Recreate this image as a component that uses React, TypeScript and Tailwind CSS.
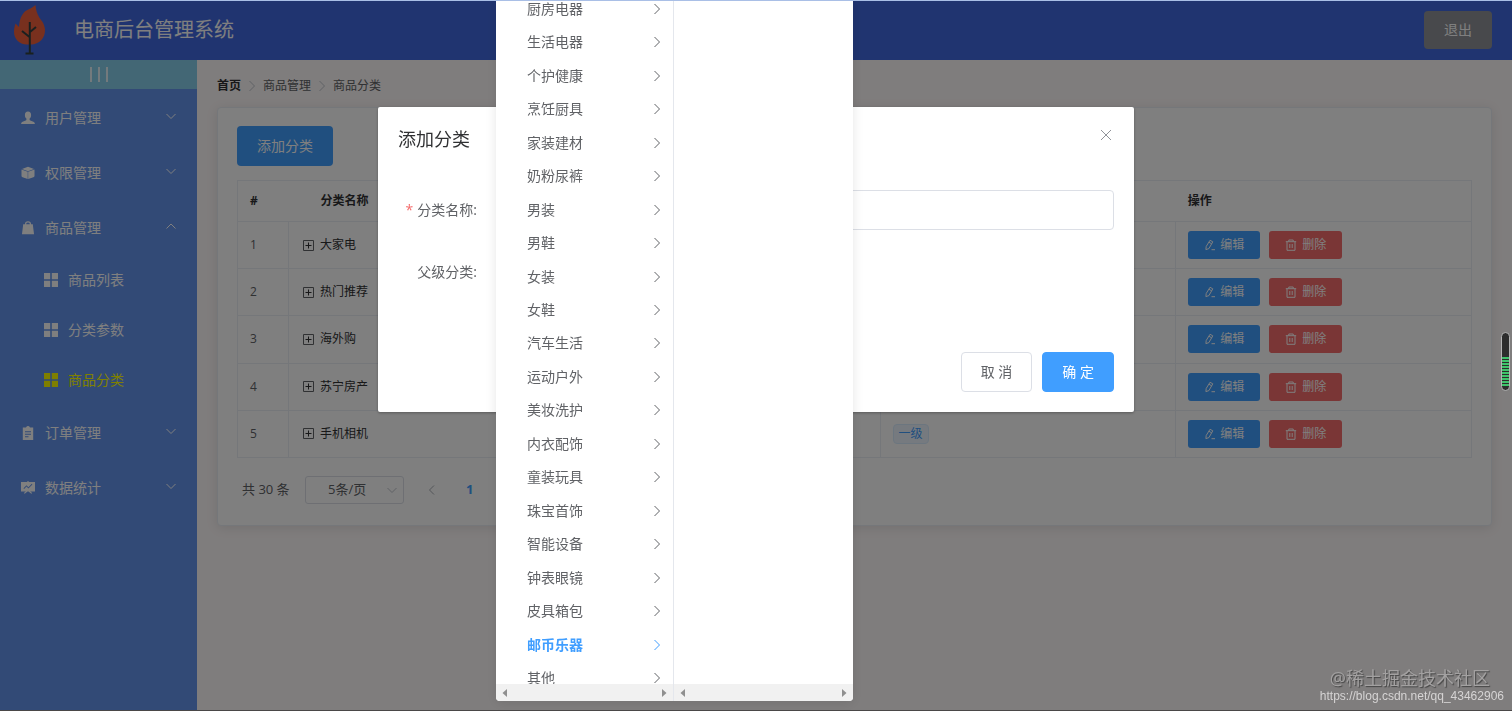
import { useState } from 'react'
import type { ReactNode } from 'react'
import clsx from 'clsx'

interface SubItem {
  id: string
  label: string
}

interface MenuItem {
  id: string
  label: string
  icon: ReactNode
  open?: boolean
  children?: SubItem[]
}

const UserIcon = () => (
  <svg viewBox="0 0 14 14" className="size-3.5" fill="currentColor">
    <path d="M7 0.6c2 0 3.1 1.4 3.1 3.3 0 1.6-.6 2.9-1.5 3.7v1.1c0 .4.3.6.7.8l3 1.2c.9.4 1.5 1 1.6 2.2H.1c.1-1.2.7-1.8 1.6-2.2l3-1.2c.4-.2.7-.4.7-.8V7.600C4.500 6.800 3.900 5.500 3.900 3.900 3.900 2 5 .6 7 .6z" />
  </svg>
)

const BoxIcon = () => (
  <svg viewBox="0 0 14 14" className="size-3.5" fill="currentColor">
    <path d="M7 .8l6 2.200L7 5.200 1 3zM.5 3.500l6.200 2.300v7.200L1.600 11.300C.9 11 .5 10.600.5 9.900zM13.500 3.500v6.400c0 .7-.4 1.100-1.100 1.400L7.200 13V5.800z" />
  </svg>
)

const GoodsIcon = () => (
  <svg viewBox="0 0 14 14" className="size-3.5" fill="none">
    <path d="M2.200 3.300h9.600l1.200 9.900H1z" fill="currentColor" />
    <path d="M4.600 5V2.900a2.400 2 0 0 1 4.800 0V5" stroke="currentColor" strokeWidth="1.200" />
  </svg>
)

const OrderIcon = () => (
  <svg viewBox="0 0 14 14" className="size-3.5" fill="currentColor">
    <path
      fillRule="evenodd"
      d="M5 1.400A2 2 0 0 1 7 0a2 2 0 0 1 2 1.400h3.200V14H1.800V1.400zM4 5.300v.9h6v-.9zm0 2.500v.9h6v-.9zm0 2.500v.9h3.500v-.9z"
    />
  </svg>
)

const StatsIcon = () => (
  <svg viewBox="0 0 14 14" className="size-3.5" fill="currentColor">
    <path
      fillRule="evenodd"
      d="M6.400 0h1.200v1H14v9.400H9.200l2 1.600-.9.800L7.500 10.500h-1L3.700 12.800l-.9-.8 2-1.600H0V1h6.400zM2.500 7.300l.6.600 2.400-2.300 1.900 1.800 4-4-.6-.6-3.400 3.400-1.900-1.900z"
    />
  </svg>
)

const GridIcon = () => (
  <svg viewBox="0 0 14 14" className="size-3.5" fill="currentColor">
    <path d="M0 0h6.200v6.200H0zM7.800 0H14v6.200H7.800zM0 7.800h6.200V14H0zM7.800 7.800H14V14H7.800z" />
  </svg>
)

const EditIcon = () => (
  <svg viewBox="0 0 12 12" className="size-3" fill="none" stroke="currentColor">
    <path d="M6 1.300l2.800 1.500-3.900 6.800-3 1 .3-3.100zM5 3.300l2.700 1.500M7.500 10.700h3.500" />
  </svg>
)

const TrashIcon = () => (
  <svg viewBox="0 0 12 12" className="size-3" fill="none" stroke="currentColor">
    <path d="M.8 2.700h10.400M3.800 2.500V1h4.400v1.500M2 2.700v8.600h8V2.700M4.800 5v4M7.200 5v4" />
  </svg>
)

const Chevron = ({ dir, className }: { dir: 'up' | 'down' | 'left' | 'right'; className?: string }) => {
  const paths = {
    up: 'M1.500 8.500L6 4l4.500 4.500',
    down: 'M1.500 4L6 8.500 10.500 4',
    left: 'M8 1.500L3.500 6 8 10.500',
    right: 'M3.500 1L8.500 6l-5 5',
  }
  return (
    <svg viewBox="0 0 12 12" className={clsx('size-3', className)} fill="none" stroke="currentColor">
      <path d={paths[dir]} />
    </svg>
  )
}

const Logo = () => (
  <svg viewBox="0 0 32 50" className="h-[50px] w-8">
    <path
      d="M21.500 0c.4 5 1.500 8 3.500 12 1.500 2.600 5.500 6 6 12.500C31.500 33 25 39.500 17 39.500h-4C5 39.500 0 33.500 0 27c0-4 .8-6 1.500-8.500L5 22c.5-5 1-10 5-14.500C13 4 17.500 4 21.500 0z"
      fill="#f0603c"
    />
    <path d="M15.800 17v31M15.500 32l-7.500-6M16 27l6-5M11.500 48.500h8" stroke="#33413f" strokeWidth="2" fill="none" />
  </svg>
)

const MENU: MenuItem[] = [
  { id: 'users', label: '用户管理', icon: <UserIcon /> },
  { id: 'rights', label: '权限管理', icon: <BoxIcon /> },
  {
    id: 'goods',
    label: '商品管理',
    icon: <GoodsIcon />,
    open: true,
    children: [
      { id: 'list', label: '商品列表' },
      { id: 'params', label: '分类参数' },
      { id: 'categories', label: '商品分类' },
    ],
  },
  { id: 'orders', label: '订单管理', icon: <OrderIcon /> },
  { id: 'reports', label: '数据统计', icon: <StatsIcon /> },
]

const CATEGORIES = ['大家电', '热门推荐', '海外购', '苏宁房产', '手机相机']

const PARENTS = [
  '厨房电器', '生活电器', '个护健康', '烹饪厨具', '家装建材', '奶粉尿裤', '男装',
  '男鞋', '女装', '女鞋', '汽车生活', '运动户外', '美妆洗护', '内衣配饰',
  '童装玩具', '珠宝首饰', '智能设备', '钟表眼镜', '皮具箱包', '邮币乐器', '其他',
]

function Header() {
  return (
    <header className="flex h-[60px] items-center justify-between bg-[#4169e1] pr-5 pl-3.5">
      <div className="flex items-center gap-7">
        <Logo />
        <h1 className="text-[20px] leading-7 text-white">电商后台管理系统</h1>
      </div>
      <button className="h-[38px] rounded bg-[#909399] px-5 text-sm text-white">退出</button>
    </header>
  )
}

function Sidebar() {
  return (
    <aside className="w-[197px] shrink-0 bg-[#6495ed] text-white">
      <button className="block h-[29px] w-full bg-[#87ceeb]" aria-label="折叠菜单">
        <span className="flex justify-center gap-1.5">
          <i className="h-[15px] w-0.5 bg-white/80" />
          <i className="h-[15px] w-0.5 bg-white/80" />
          <i className="h-[15px] w-0.5 bg-white/80" />
        </span>
      </button>
      <nav className="pt-px text-sm">
        {MENU.map((item) => (
          <div key={item.id}>
            <a href="#" className="flex h-[55px] items-center pr-5 pl-[21px]">
              {item.icon}
              <span className="ml-2.5 flex-1">{item.label}</span>
              <Chevron dir={item.open ? 'up' : 'down'} className="mb-1" />
            </a>
            {item.children?.map((sub) => (
              <a
                key={sub.id}
                href="#"
                className={clsx(
                  'flex h-[50px] items-center gap-2.5 pl-11',
                  sub.id === 'categories' && 'text-[#ffff00]',
                )}
              >
                <GridIcon />
                <span>{sub.label}</span>
              </a>
            ))}
          </div>
        ))}
      </nav>
    </aside>
  )
}

function Breadcrumb() {
  return (
    <nav className="flex items-center gap-[5px] text-xs leading-3 text-[#606266]">
      <a href="#" className="font-bold text-[#303133]">
        首页
      </a>
      <Chevron dir="right" className="text-[#c0c4cc]" />
      <span>商品管理</span>
      <Chevron dir="right" className="text-[#c0c4cc]" />
      <span>商品分类</span>
    </nav>
  )
}

function CategoryTable() {
  return (
    <table className="mt-3.5 h-[278px] w-full table-fixed border-collapse border border-[#ebeef5] text-left text-xs text-[#606266]">
      <colgroup>
        <col className="w-[51px]" />
        <col />
        <col />
        <col />
        <col />
      </colgroup>
      <thead className="text-[#303133]">
        <tr className="h-[41px] border-b border-[#ebeef5]">
          <th className="pl-3">#</th>
          <th className="pl-8">分类名称</th>
          <th className="pl-3">是否有效</th>
          <th className="pl-3">排序</th>
          <th className="pl-3">操作</th>
        </tr>
      </thead>
      <tbody>
        {CATEGORIES.map((name, i) => (
          <tr key={name}>
            <td className="border border-[#ebeef5] pl-3">{i + 1}</td>
            <td className="border border-[#ebeef5] pl-3.5">
              <div className="flex items-center gap-1.5 text-[#303133]">
                <svg viewBox="0 0 11 11" className="size-[11px]" fill="none" stroke="#606266">
                  <path d="M.5.5h10v10H.5z" />
                  <path d="M5.500 2.500v6M2.500 5.500h6" stroke="#303133" />
                </svg>
                {name}
              </div>
            </td>
            <td className="border border-[#ebeef5] pl-3" />
            <td className="border border-[#ebeef5] pl-3">
              <span className="inline-block h-5 rounded border border-[#d9ecff] bg-[#ecf5ff] px-[5px] leading-[18px] text-[#409eff]">
                一级
              </span>
            </td>
            <td className="border border-[#ebeef5] pl-3">
              <div className="flex gap-[9px] text-white">
                <button className="flex h-7 items-center gap-1 rounded-[3px] bg-[#409eff] px-4">
                  <EditIcon />
                  编辑
                </button>
                <button className="flex h-7 items-center gap-[5px] rounded-[3px] bg-[#f56c6c] px-4">
                  <TrashIcon />
                  删除
                </button>
              </div>
            </td>
          </tr>
        ))}
      </tbody>
    </table>
  )
}

function Pagination() {
  return (
    <div className="mt-[18px] flex items-center pl-[5px] text-[13px] text-[#606266]">
      <span className="w-[63px]">共 30 条</span>
      <div className="relative">
        <select
          aria-label="每页条数"
          className="h-7 w-[99px] appearance-none rounded-[3px] border border-[#dcdfe6] bg-white pl-[22px]"
        >
          <option>5条/页</option>
          <option>10条/页</option>
        </select>
        <Chevron dir="down" className="pointer-events-none absolute top-2 right-1.5 text-[#c0c4cc]" />
      </div>
      <button className="ml-[22px] text-[#a8abb2]" aria-label="上一页">
        <Chevron dir="left" />
      </button>
      <button className="ml-7 font-bold text-[#409eff]">1</button>
    </div>
  )
}

function AddDialog() {
  const [name, setName] = useState('')
  return (
    <div className="fixed inset-0 flex items-start justify-center bg-black/50 pt-[15vh]">
      <form className="w-1/2 rounded-xs bg-white text-sm text-[#606266] shadow-[0_1px_3px_rgba(0,0,0,0.3)]">
        <div className="flex items-center justify-between px-5 pt-5">
          <h2 className="text-lg leading-6 text-[#303133]">添加分类</h2>
          <button type="button" aria-label="关闭" className="mr-0.5 mb-2 text-[#909399]">
            <svg viewBox="0 0 12 12" className="size-3" fill="none" stroke="currentColor">
              <path d="M1 1l10 10M11 1L1 11" />
            </svg>
          </button>
        </div>
        <div className="grid gap-[22px] px-5 pt-[39px]">
          <div className="flex items-center">
            <label htmlFor="cat-name" className="w-[99px] pr-5 text-right">
              <span className="mr-1 text-[#f56c6c]">*</span>
              分类名称:
            </label>
            <input
              id="cat-name"
              value={name}
              onChange={(e) => setName(e.target.value)}
              className="h-10 min-w-0 flex-1 rounded border border-[#dcdfe6] px-4 outline-none"
            />
          </div>
          <div className="flex items-center">
            <label htmlFor="cat-parent" className="w-[99px] pr-5 text-right">
              父级分类:
            </label>
            <input id="cat-parent" readOnly className="h-10 w-[220px] rounded border border-[#dcdfe6] px-4" />
          </div>
        </div>
        <div className="flex justify-end gap-2.5 px-5 pt-[60px] pb-5">
          <button type="button" className="h-10 rounded border border-[#dcdfe6] px-[19px]">
            取 消
          </button>
          <button type="button" className="h-10 rounded border border-[#409eff] bg-[#409eff] px-[19px] text-white">
            确 定
          </button>
        </div>
      </form>
    </div>
  )
}

function ScrollTrack() {
  return (
    <div className="flex h-[17px] shrink-0 items-center justify-between bg-[#f1f1f1] px-1.5 text-[#8f8f8f]">
      <svg viewBox="0 0 5 8" className="h-2 w-[5px]" fill="currentColor">
        <path d="M5 0v8L.5 4z" />
      </svg>
      <svg viewBox="0 0 5 8" className="h-2 w-[5px]" fill="currentColor">
        <path d="M0 0v8l4.500-4z" />
      </svg>
    </div>
  )
}

function CascaderPanel() {
  return (
    <div className="fixed top-0 left-[496px] flex h-[701px] w-[357px] overflow-hidden rounded-b bg-white text-sm text-[#606266] shadow-[0_2px_12px_rgba(0,0,0,0.1)]">
      <div className="flex w-[178px] flex-col border-r border-[#e4e7ed]">
        <div className="min-h-0 flex-1 overflow-hidden">
          {/* scrolled to the end, the first row is cut by the window */}
          <ul className="-mt-2 grid h-[703px] auto-rows-fr leading-3">
            {PARENTS.map((p) => (
              <li
                key={p}
                className={clsx(
                  'flex items-center justify-between pr-2.5 pl-[31px]',
                  p === '邮币乐器' && 'font-bold text-[#409eff]',
                )}
              >
                {p}
                <Chevron dir="right" />
              </li>
            ))}
          </ul>
        </div>
        <ScrollTrack />
      </div>
      <div className="flex flex-1 flex-col justify-end">
        <ScrollTrack />
      </div>
    </div>
  )
}

function Watermark() {
  return (
    <div className="fixed right-2 bottom-[7px] text-right">
      <p className="pr-3.5 text-lg leading-5 text-[#a3a1a1] [text-shadow:1px_1px_1px_#444]">@稀土掘金技术社区</p>
      <p className="font-['Liberation_Sans',sans-serif] text-xs leading-4 text-[#d6d4d4]">
        https://blog.csdn.net/qq_43462906
      </p>
    </div>
  )
}

function BatteryMeter() {
  return (
    <div className="fixed top-[332px] right-0.5 flex h-[59px] w-[9px] flex-col justify-end gap-px overflow-hidden rounded-full border border-[#b5b5b5] bg-[#2d2d2d] pb-1">
      {Array.from({ length: 10 }, (_, i) => (
        <i key={i} className="h-0.5 bg-[#3fc46b]" />
      ))}
    </div>
  )
}

export default function App() {
  return (
    <div className="flex min-h-screen flex-col bg-[#fffafa] font-['Open_Sans','Noto_Sans_CJK_SC',sans-serif]">
      <Header />
      <div className="flex flex-1">
        <Sidebar />
        <main className="min-w-0 flex-1 px-5 pt-5">
          <Breadcrumb />
          <section className="mt-[15px] rounded border border-[#ebeef5] bg-white px-[19px] pt-[18px] pb-[21px] shadow-[0_2px_12px_rgba(0,0,0,0.1)]">
            <button className="block h-10 rounded bg-[#409eff] px-5 text-sm text-white">添加分类</button>
            <CategoryTable />
            <Pagination />
          </section>
        </main>
      </div>
      <AddDialog />
      <CascaderPanel />
      <div className="fixed inset-x-0 top-0 h-px bg-[#a9bfe6]" />
      <div className="fixed inset-x-0 bottom-0 h-px bg-[#4a4748]" />
      <Watermark />
      <BatteryMeter />
    </div>
  )
}
